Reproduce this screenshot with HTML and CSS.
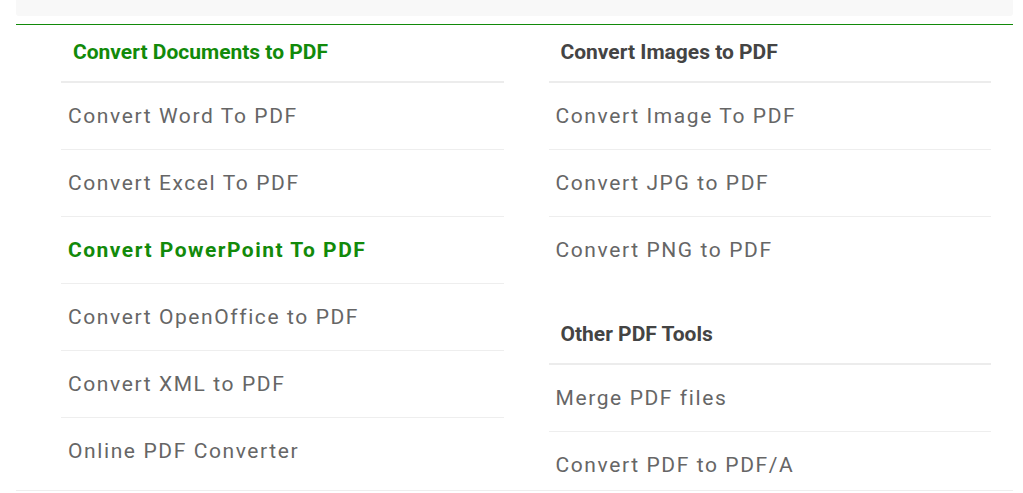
FILE: index.html
```html
<!DOCTYPE html>
<html>
<head>
    <meta charset="UTF-8">
    <title>PDF Tools</title>
    <link rel="stylesheet" href="styles.css">
</head>
<body>
    <div class="page">
        <div class="topbar"></div>

        <!-- Tool menu -->
        <div class="menu">
            <div class="col">
                <h4 class="head green">Convert Documents to PDF</h4>
                <ul class="list">
                    <li><a href="#">Convert Word To PDF</a></li>
                    <li><a href="#">Convert Excel To PDF</a></li>
                    <li><a href="#" class="active">Convert PowerPoint To PDF</a></li>
                    <li><a href="#">Convert OpenOffice to PDF</a></li>
                    <li><a href="#">Convert XML to PDF</a></li>
                    <li><a href="#">Online PDF Converter</a></li>
                </ul>
            </div>
            <div class="col">
                <h4 class="head">Convert Images to PDF</h4>
                <ul class="list">
                    <li><a href="#">Convert Image To PDF</a></li>
                    <li><a href="#">Convert JPG to PDF</a></li>
                    <li><a href="#">Convert PNG to PDF</a></li>
                </ul>
                <h4 class="head second">Other PDF Tools</h4>
                <ul class="list last">
                    <li><a href="#">Merge PDF files</a></li>
                    <li><a href="#">Convert PDF to PDF/A</a></li>
                </ul>
            </div>
        </div>
    </div>
</body>
</html>
```

FILE: styles.css
```css
/* page layout */
body {
    margin: 0;
    font-family: Roboto, "Liberation Sans", sans-serif;
    background: #fff;
}

.page {
    margin: 0 10px 0 16px;
}

.topbar {
    height: 16px;
    background-color: #f8f8f8;
    border-radius: 0 0 3px 3px;
}

.menu {
    margin-top: 8px;
    border-top: 1px solid #128a0a;
    border-bottom: 1px solid #eeeeee;
    padding: 0 22px 0 45px;
    display: grid;
    grid-template-columns: 1fr 1fr;
    column-gap: 45px;
    align-items: start;
}

.head {
    margin: 0;
    padding: 15px 12px 17px;
    line-height: 24px;
    font-size: 21px;
    font-weight: bold;
    color: #444;
    border-bottom: 2px solid #ececec;
}

.head.green {
    color: #128a0a;
}

.head.second {
    margin-top: 24px;
}

.list {
    list-style: none;
    margin: 0;
    padding: 0;
}

.list li {
    padding: 21px 7px;
    font-size: 21px;
    line-height: 24px;
    border-bottom: 1px solid #eeeeee;
}

.list li:last-child {
    border-bottom: none;
}

.list.last li:last-child {
    padding-bottom: 13px;
}

.list a {
    letter-spacing: 1.6px;
    color: #666;
    text-decoration: none;
}

.list a.active {
    color: #128a0a;
    font-weight: bold;
    letter-spacing: 1.5px;
}
```
